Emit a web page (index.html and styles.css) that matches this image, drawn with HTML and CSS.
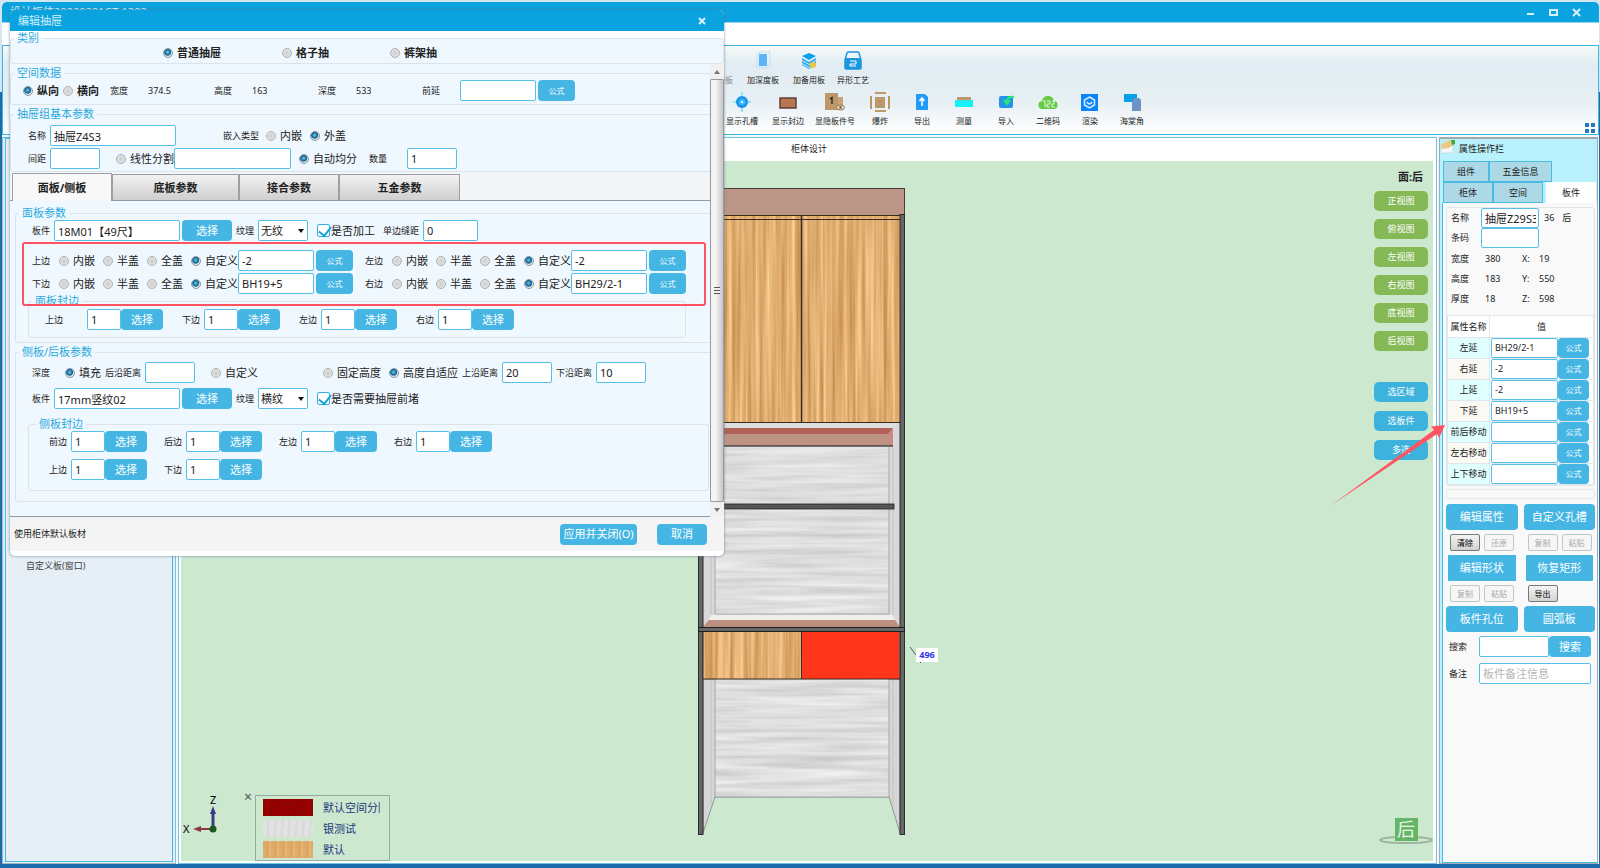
FILE: index.html
```html
<!DOCTYPE html>
<html lang="zh-CN">
<head>
  <meta charset="UTF-8" />
  <meta name="viewport" content="width=device-width, initial-scale=1.0" />
  <title>柜体设计</title>
  <link rel="stylesheet" href="styles.css">
</head>
<body>
  <div class="app">
    <header class="titlebar">
      <span class="app-title">设计柜体20220221GT-1303</span>
      <div class="win-buttons">
        <button aria-label="最小化"><svg width="9" height="9"><path d="M1 6h7" stroke="#d5f1fc" stroke-width="2"/></svg></button>
        <button aria-label="最大化"><svg width="9" height="9"><rect x="1" y="2" width="7" height="5" fill="none" stroke="#d5f1fc" stroke-width="2"/></svg></button>
        <button aria-label="关闭"><svg width="9" height="9"><path d="M1 1l7 7M8 1l-7 7" stroke="#d5f1fc" stroke-width="2"/></svg></button>
      </div>
    </header>
    <div class="menubar"></div>

    <nav class="ribbon">
      <div class="tools tools-top">
        <button class="tool dim"><svg width="20" height="20"><rect x="4" y="3" width="12" height="14" fill="#9ccdf5"/></svg>加功能板</button>
        <button class="tool"><svg width="20" height="20"><path d="M6 1h11v12l-3 4H4V5z" fill="none" stroke="#bfe0fa"/><rect x="6" y="3" width="8" height="12" fill="#5cb4f8"/></svg>加深度板</button>
        <button class="tool"><svg width="20" height="20"><path d="M10 2l7 3-7 4-7-4z" fill="#0aa0f0"/><path d="M3 7l7 4 7-4v2l-7 4-7-4zM3 10l7 4 7-4v2l-7 4-7-4zM3 13l7 4 7-4v1l-7 4-7-4z" fill="#25a8f2"/><circle cx="14" cy="14" r="3" fill="#eec43c"/></svg>加备用板</button>
        <button class="tool"><svg width="20" height="20"><path d="M2 9l2-7q.5-1 1.500-1h9q1 0 1.500 1l2 7v8q0 1-1 1H3q-1 0-1-1z" fill="#eaf6fd" stroke="#1c97dc" stroke-width="1.500"/><rect x="2" y="7" width="16" height="11" rx="1" fill="#1c97dc"/><path d="M7 10h6v3H7v2h6" fill="none" stroke="#fff"/></svg>异形工艺</button>
      </div>
      <div class="tools tools-bottom">
        <button class="tool"><svg width="20" height="20"><path d="M10 0v20M1 10h18" stroke="#8ce6fb" stroke-width="2"/><circle cx="10" cy="10" r="6" fill="#1e93ee"/><circle cx="10" cy="10" r="3" fill="#3fc0f6"/><circle cx="10" cy="10" r="1" fill="#fff"/></svg>显示孔槽</button>
        <button class="tool"><svg width="20" height="20"><rect x="2" y="6" width="16" height="10" fill="#b97552" stroke="#5c4034" stroke-width="1.500"/></svg>显示封边</button>
        <button class="tool"><svg width="20" height="20"><rect x="0" y="1" width="13" height="17" fill="#bd966a"/><rect x="13" y="5" width="5" height="10" fill="#c7a47c"/><path d="M5 7l2-1.500V12" fill="none" stroke="#222" stroke-width="1.300"/><ellipse cx="15.500" cy="15.500" rx="4" ry="2.500" fill="#e8dccb" stroke="#8e7252"/><circle cx="15.500" cy="15.500" r="1.300" fill="#70563a"/></svg>显隐板件号</button>
        <button class="tool"><svg width="20" height="20"><g fill="#bd966a"><rect x="5" y="5" width="10" height="11"/><rect x="5" y="0" width="11" height="2"/><rect x="5" y="18" width="11" height="2"/><rect x="0" y="4" width="2" height="13"/><rect x="18" y="4" width="2" height="13"/></g></svg>爆炸</button>
        <button class="tool"><svg width="20" height="20"><path d="M4 2h9l3 3v13H4z" fill="#209bf7"/><path d="M10 14V7M7.500 9L10 6l2.500 3" fill="none" stroke="#fff" stroke-width="1.500"/></svg>导出</button>
        <button class="tool"><svg width="20" height="20"><rect x="3" y="5" width="14" height="4" fill="#bd966a"/><rect x="1" y="8" width="18" height="7" fill="#0ff5fb"/><path d="M4 8v2M7 8v3M10 8v2M13 8v3M16 8v2" stroke="#60cbd6"/></svg>测量</button>
        <button class="tool"><svg width="20" height="20"><rect x="3" y="4" width="14" height="12" rx="2" fill="#2396e8"/><path d="M18 5q-7-1-7 5M8 8l3 4 3-4" fill="none" stroke="#29ec70" stroke-width="2"/></svg>导入</button>
        <button class="tool"><svg width="20" height="20"><path d="M5 17a4 4 0 0 1-1-8q1-5 6-5 5 0 6 5a4 4 0 0 1-1 8z" fill="#65ca45"/><path d="M7 15V9M5 10l2-2M9 9h3v3H9v3h3M14 9h2v3h-2v3h3" fill="none" stroke="#e6f8df"/></svg>二维码</button>
        <button class="tool"><svg width="20" height="20"><rect x="1" y="2" width="17" height="17" fill="#0a84fb"/><path d="M9.500 5l5 3v5l-5 3-5-3V8z" fill="none" stroke="#d9edff" stroke-width="1.500"/><path d="M7 10q2.500 4 5 0" fill="none" stroke="#d9edff" stroke-width="1.500"/></svg>渲染</button>
        <button class="tool"><svg width="20" height="20"><rect x="2" y="2" width="13" height="8" fill="#079fe8"/><path d="M12 6h5l2 2v11h-9V9z" fill="#6d93c4"/></svg>海棠角</button>
      </div>
      <svg class="ribbon-grid" width="10" height="10"><path d="M0 0h4v4H0zM6 0h4v4H6zM0 6h4v4H0zM6 6h4v4H6z" fill="#2678b8"/></svg>
    </nav>

    <main class="workspace">
      <aside class="side-left">
        <div class="side-left-inner"><p>自定义板(窗口)</p></div>
      </aside>

      <section class="center">
        <div class="center-tab">柜体设计</div>
        <div class="stage">
          <svg class="cabinet" width="209" height="648" viewBox="697 188 209 648">
            <defs>
              <filter id="wood" x="0" y="0" width="1" height="1" color-interpolation-filters="sRGB">
                <feTurbulence type="fractalNoise" baseFrequency="0.25 0.005" numOctaves="3" seed="4"/>
                <feColorMatrix values="0.34 0 0 0 0.71  0.4 0 0 0 0.48  0.42 0 0 0 0.23  0 0 0 0 1"/>
              </filter>
              <filter id="ash" x="0" y="0" width="1" height="1" color-interpolation-filters="sRGB">
                <feTurbulence type="fractalNoise" baseFrequency="0.008 0.18" numOctaves="3" seed="9"/>
                <feColorMatrix values="0.22 0 0 0 0.76  0.22 0 0 0 0.76  0.22 0 0 0 0.76  0 0 0 0 1"/>
              </filter>
            </defs>
            <rect x="703" y="422" width="197" height="257" fill="#d9d9d9"/>
            <path d="M703 679h197v154l-11-36H715l-12 36z" fill="#d6d6d6" stroke="#777" stroke-width=".7"/>
            <rect x="715" y="447" width="174" height="167" filter="url(#ash)"/>
            <rect x="715" y="679" width="174" height="118" filter="url(#ash)"/>
            <path d="M715 447v167h174V447M715 679v118h174V679" fill="none" stroke="#999" stroke-width=".8"/>
            <path d="M711 447v170M893 447v170M711 679v128M893 679v128" stroke="#c2c2c2"/>
            <path d="M703 422h197l-7 6H703z" fill="#dedede"/>
            <rect x="703" y="428" width="190" height="18" fill="#bd9484"/>
            <path d="M703 428h190l-5 6H703z" fill="#b16157"/>
            <path d="M888 434l5-6v18h-4z" fill="#ca8886"/>
            <path d="M703 446h190" stroke="#111"/>
            <rect x="703" y="504" width="191" height="5" fill="#555" stroke="#222" stroke-width=".8"/>
            <path d="M711 615h182l2 5H709z" fill="#f0f0ea"/>
            <path d="M709 620h186l5 7H703z" fill="#bb9080"/>
            <rect x="698.500" y="188.500" width="206" height="27" fill="#bb9585" stroke="#4a3c36"/>
            <rect x="703" y="215" width="197" height="207" filter="url(#wood)"/>
            <path d="M703 215.500h197M703 219.500h197M703 422.500h197" stroke="#3a2a1b"/>
            <path d="M801.500 216v206" stroke="#3a2a1b" stroke-width="1.500"/>
            <rect x="698.500" y="214.500" width="4.500" height="620" fill="#666" stroke="#2c2c2c"/>
            <rect x="900" y="214.500" width="4.500" height="620" fill="#666" stroke="#2c2c2c"/>
            <rect x="698.500" y="627.500" width="206" height="4" fill="#666" stroke="#1f1f1f"/>
            <rect x="703" y="632" width="98" height="47" filter="url(#wood)"/>
            <rect x="801" y="632" width="98" height="47" fill="#ff351c"/>
            <path d="M703 632v47h197v-47M801.500 632v47" fill="none" stroke="#3a2a1b"/>
          </svg>
          <svg class="leader" width="12" height="18"><path d="M1 1l6 8M11 16l1 1" stroke="#555"/></svg>
          <span class="dimension">496</span>

          <div class="view-tools">
            <strong>面:后</strong>
            <div class="view-buttons">
              <button>正视图</button>
              <button>俯视图</button>
              <button>左视图</button>
              <button>右视图</button>
              <button>底视图</button>
              <button>后视图</button>
            </div>
            <div class="pick-buttons">
              <button>选区域</button>
              <button>选板件</button>
              <button>多选</button>
            </div>
          </div>

          <svg class="axes" width="40" height="46">
            <path d="M31 35V17" stroke="#3a3a86" stroke-width="3"/><path d="M31 12l3 8h-6z" fill="#3a3a86"/>
            <path d="M31 35H16" stroke="#8a3a42" stroke-width="2"/><path d="M11 35l8-3v6z" fill="#8a3a42"/>
            <circle cx="31" cy="35" r="3.500" fill="#1c5a22"/>
            <text x="28" y="10">Z</text><text x="1" y="39">X</text>
          </svg>
          <div class="legend-close">×</div>
          <ul class="legend">
            <li><i class="swatch red"></i><span>默认空间分隔</span></li>
            <li><i class="swatch silver"></i><span>银测试</span></li>
            <li><i class="swatch oak"></i><span>默认</span></li>
          </ul>
          <div class="compass">
            <svg width="56" height="10"><ellipse cx="28" cy="5" rx="26" ry="3" fill="none" stroke="#9fb5a1" stroke-width="2"/></svg>
            <span>后</span>
          </div>
        </div>
      </section>

      <aside class="side-right">
        <div class="props-head">
          <h2><svg width="16" height="15"><rect x="1" y="5" width="12" height="9" fill="#f4f6f8" stroke="#c9ced3" stroke-width=".6"/><path d="M1 6l6-4 6-1 1 5-6 3-6 1z" fill="#ecc883"/><path d="M11 1h4v4l-3 1z" fill="#3eaa3c"/></svg>属性操作栏</h2>
          <div class="ptabs ptabs-top"><button>组件</button><button>五金信息</button></div>
          <div class="ptabs"><button>柜体</button><button>空间</button><button class="active">板件</button></div>
        </div>
        <div class="props-body">
          <div class="props-box">
            <div class="prow"><label for="pname">名称</label><input id="pname" value="抽屉Z29S3"><span>36</span><span>后</span></div>
            <div class="prow"><label for="pcode">条码</label><input id="pcode"></div>
            <dl class="dims">
              <dt>宽度</dt><dd>380</dd><dt>X:</dt><dd>19</dd>
              <dt>高度</dt><dd>183</dd><dt>Y:</dt><dd>550</dd>
              <dt>厚度</dt><dd>18</dd><dt>Z:</dt><dd>598</dd>
            </dl>
            <table class="ptable">
              <thead><tr><th>属性名称</th><th>值</th></tr></thead>
              <tbody>
                <tr><th>左延</th><td><div><input aria-label="左延" value="BH29/2-1"><button>公式</button></div></td></tr>
                <tr><th>右延</th><td><div><input aria-label="右延" value="-2"><button>公式</button></div></td></tr>
                <tr><th>上延</th><td><div><input aria-label="上延" value="-2"><button>公式</button></div></td></tr>
                <tr><th>下延</th><td><div><input aria-label="下延" value="BH19+5"><button>公式</button></div></td></tr>
                <tr><th>前后移动</th><td><div><input aria-label="前后移动"><button>公式</button></div></td></tr>
                <tr><th>左右移动</th><td><div><input aria-label="左右移动"><button>公式</button></div></td></tr>
                <tr><th>上下移动</th><td><div><input aria-label="上下移动"><button>公式</button></div></td></tr>
              </tbody>
            </table>
          </div>
          <div class="strip"></div>
          <div class="actions">
            <button class="btn big">编辑属性</button><button class="btn big">自定义孔槽</button>
            <div class="minis"><button>清除</button><button disabled>还原</button></div>
            <div class="minis"><button disabled>复制</button><button disabled>粘贴</button></div>
            <button class="btn big square">编辑形状</button><button class="btn big square">恢复矩形</button>
            <div class="minis"><button disabled>复制</button><button disabled>粘贴</button></div>
            <div class="minis"><button>导出</button></div>
            <button class="btn big">板件孔位</button><button class="btn big">圆弧板</button>
          </div>
          <div class="search"><label for="psearch">搜索</label><input id="psearch"><button class="btn">搜索</button></div>
          <div class="search note"><label for="pnote">备注</label><input id="pnote" placeholder="板件备注信息"></div>
        </div>
      </aside>
    </main>
  </div>

  <div class="dialog">
    <div class="dialog-title"><span>编辑抽屉</span><button aria-label="关闭"><svg width="8" height="8"><path d="M1 1l6 6M7 1l-6 6" stroke="#d5f1fc" stroke-width="2"/></svg></button></div>
    <fieldset class="kind">
      <legend>类别</legend>
      <div class="row kinds">
        <label class="opt"><input type="radio" name="kind" checked>普通抽屉</label>
        <label class="opt"><input type="radio" name="kind">格子抽</label>
        <label class="opt"><input type="radio" name="kind">裤架抽</label>
      </div>
    </fieldset>

    <div class="dialog-scroll">
      <div class="dialog-content">
        <fieldset class="space">
          <legend>空间数据</legend>
          <div class="row">
            <label class="opt bold"><input type="radio" name="dir" checked>纵向</label>
            <label class="opt bold"><input type="radio" name="dir">横向</label>
            <span class="datum"><b>宽度</b>374.5</span>
            <span class="datum"><b>高度</b>163</span>
            <span class="datum"><b>深度</b>533</span>
            <label class="datum-label" for="front">前延</label>
            <input class="w76" id="front"><button class="btn formula">公式</button>
          </div>
        </fieldset>

        <fieldset class="basic">
          <legend>抽屉组基本参数</legend>
          <div class="row">
            <label class="lab" for="gname">名称</label><input class="w125" id="gname" value="抽屉Z4S3">
            <span class="lab ahead-l">嵌入类型</span>
            <div class="opts">
              <label class="opt"><input type="radio" name="embed">内嵌</label>
              <label class="opt"><input type="radio" name="embed" checked>外盖</label>
            </div>
          </div>
          <div class="row split">
            <label class="lab" for="gap">间距</label><input class="w50" id="gap">
            <label class="opt ahead"><input type="radio" name="split">线性分割</label><input class="w117" aria-label="线性分割">
            <label class="opt near"><input type="radio" name="split" checked>自动均分</label>
            <label class="lab mid" for="count">数量</label><input class="w50 ahead" id="count" value="1">
          </div>
        </fieldset>

        <div class="tabs">
          <button class="active">面板/侧板</button>
          <button>底板参数</button>
          <button>接合参数</button>
          <button>五金参数</button>
        </div>

        <div class="tab-page">
          <fieldset class="front-panel">
            <legend>面板参数</legend>
            <div class="row">
              <label class="lab" for="board">板件</label><input class="w125" id="board" value="18M01【49尺】"><button class="btn pick">选择</button>
              <label class="lab" for="grain">纹理</label><span class="select"><select id="grain"><option>无纹</option></select></span>
              <label class="check"><input type="checkbox" checked>是否加工</label>
              <label class="lab" for="seam">单边缝距</label><input class="w55" id="seam" value="0">
            </div>
            <div class="row edge first">
              <span class="lab">上边</span>
              <div class="opts">
                <label class="opt"><input type="radio" name="top">内嵌</label>
                <label class="opt"><input type="radio" name="top">半盖</label>
                <label class="opt"><input type="radio" name="top">全盖</label>
                <label class="opt"><input type="radio" name="top" checked>自定义</label>
              </div>
              <input class="w76" aria-label="上边" value="-2"><button class="btn formula">公式</button>
              <span class="lab">左边</span>
              <div class="opts">
                <label class="opt"><input type="radio" name="left">内嵌</label>
                <label class="opt"><input type="radio" name="left">半盖</label>
                <label class="opt"><input type="radio" name="left">全盖</label>
                <label class="opt"><input type="radio" name="left" checked>自定义</label>
              </div>
              <input class="w76" aria-label="左边" value="-2"><button class="btn formula">公式</button>
            </div>
            <div class="row edge">
              <span class="lab">下边</span>
              <div class="opts">
                <label class="opt"><input type="radio" name="bottom">内嵌</label>
                <label class="opt"><input type="radio" name="bottom">半盖</label>
                <label class="opt"><input type="radio" name="bottom">全盖</label>
                <label class="opt"><input type="radio" name="bottom" checked>自定义</label>
              </div>
              <input class="w76" aria-label="下边" value="BH19+5"><button class="btn formula">公式</button>
              <span class="lab">右边</span>
              <div class="opts">
                <label class="opt"><input type="radio" name="right">内嵌</label>
                <label class="opt"><input type="radio" name="right">半盖</label>
                <label class="opt"><input type="radio" name="right">全盖</label>
                <label class="opt"><input type="radio" name="right" checked>自定义</label>
              </div>
              <input class="w76" aria-label="右边" value="BH29/2-1"><button class="btn formula">公式</button>
            </div>
            <fieldset class="sub band">
              <legend>面板封边</legend>
              <div class="row">
                <div class="cell"><label class="lab wide" for="b1">上边</label><input id="b1" value="1"><button class="btn">选择</button></div>
                <div class="cell"><label class="lab" for="b2">下边</label><input id="b2" value="1"><button class="btn">选择</button></div>
                <div class="cell"><label class="lab" for="b3">左边</label><input id="b3" value="1"><button class="btn">选择</button></div>
                <div class="cell"><label class="lab" for="b4">右边</label><input id="b4" value="1"><button class="btn">选择</button></div>
              </div>
            </fieldset>
          </fieldset>

          <fieldset class="side-panel">
            <legend>侧板/后板参数</legend>
            <div class="row">
              <span class="lab">深度</span>
              <label class="opt depth"><input type="radio" name="depth" checked>填充</label>
              <label class="lab tight" for="back">后沿距离</label><input class="w50" id="back">
              <label class="opt ahead"><input type="radio" name="depth">自定义</label>
              <label class="opt far"><input type="radio" name="height">固定高度</label>
              <label class="opt near"><input type="radio" name="height" checked>高度自适应</label>
              <label class="lab tight" for="up">上沿距离</label><input class="w50" id="up" value="20">
              <label class="lab tight" for="down">下沿距离</label><input class="w50" id="down" value="10">
            </div>
            <div class="row second">
              <label class="lab" for="board2">板件</label><input class="w125" id="board2" value="17mm竖纹02"><button class="btn pick">选择</button>
              <label class="lab" for="grain2">纹理</label><span class="select"><select id="grain2"><option>横纹</option></select></span>
              <label class="check"><input type="checkbox" checked>是否需要抽屉前堵</label>
            </div>
            <fieldset class="sub side-band">
              <legend>侧板封边</legend>
              <div class="row">
                <div class="cell"><label class="lab" for="s1">前边</label><input id="s1" value="1"><button class="btn">选择</button></div>
                <div class="cell"><label class="lab" for="s2">后边</label><input id="s2" value="1"><button class="btn">选择</button></div>
                <div class="cell"><label class="lab" for="s3">左边</label><input id="s3" value="1"><button class="btn">选择</button></div>
                <div class="cell"><label class="lab" for="s4">右边</label><input id="s4" value="1"><button class="btn">选择</button></div>
              </div>
              <div class="row">
                <div class="cell"><label class="lab" for="s5">上边</label><input id="s5" value="1"><button class="btn">选择</button></div>
                <div class="cell"><label class="lab" for="s6">下边</label><input id="s6" value="1"><button class="btn">选择</button></div>
              </div>
            </fieldset>
          </fieldset>
        </div>
      </div>
      <div class="scrollbar">
        <span class="arrow up"></span>
        <div class="thumb"><i></i></div>
        <span class="arrow down"></span>
      </div>
    </div>

    <footer class="dialog-footer">
      <span>使用柜体默认板材</span>
      <div><button class="btn apply">应用并关闭(O)</button><button class="btn cancel">取消</button></div>
    </footer>
    <div class="mark"></div>
  </div>

  <svg class="pointer" width="116" height="84" viewBox="1330 424 116 84"><path d="M1331 505.500L1434 430l-3-3.500 14-1.500-6 13-2-4z" fill="#ff5361"/></svg>
</body>
</html>
```
FILE: styles.css
```css
* {
  margin: 0;
  padding: 0;
  box-sizing: border-box;
}
body {
  position: relative;
  height: 100vh;
  overflow: hidden;
  font-family: 'Noto Sans', 'Noto Sans CJK SC', sans-serif;
  font-size: 9px;
  line-height: 14px;
  color: #222;
  background: linear-gradient(#d4e6f2 0, #d4e6f2 92px, #1a6cab 92px, #1a6cab 100%);
}
button, input, select {
  font: inherit;
  color: inherit;
  border: none;
  outline: none;
}
button {
  background: none;
  white-space: nowrap;
  line-height: 12px;
}
input, select {
  background: #fff;
  border: 1px solid #55bfe8;
  border-radius: 2px;
  min-width: 0;
}

/* main window */
.app {
  height: 100%;
  padding: 2px 1px 4px 2px;
  display: flex;
  flex-direction: column;
}
.titlebar {
  height: 21px;
  flex: none;
  display: flex;
  justify-content: space-between;
  align-items: center;
  padding: 0 18px 0 8px;
  border-radius: 5px 5px 0 0;
  background: #0aa3df;
  border-bottom: 1px solid #8fd6f0;
  color: #d5f1fc;
  font-size: 11px;
}
.win-buttons {
  display: flex;
  gap: 14px;
}
.win-buttons svg {
  display: block;
}
.menubar {
  height: 22px;
  flex: none;
  background: #fff;
}
.ribbon {
  position: relative;
  height: 90px;
  flex: none;
  overflow: hidden;
  border: 1px solid #3bb5e2;
  background: linear-gradient(#f7faf7, #e1ecf3 18px, #e6eff3 55px, #fff);
}
.tools {
  display: flex;
}
.tools-top {
  padding: 5px 0 0 691px;
}
.tools-bottom {
  padding: 2px 0 0 716px;
}
.tool {
  padding: 0 4px;
  display: flex;
  flex-direction: column;
  align-items: center;
  gap: 3px;
  min-width: 42px;
  height: 39px;
  font-size: 8px;
}
.tool svg {
  flex: none;
}
.tool:nth-child(-n+3) {
  min-width: 46px;
}
.dim {
  color: #888;
}
.ribbon-grid {
  position: absolute;
  right: 3px;
  bottom: 1px;
}
.workspace {
  flex: 1;
  min-height: 0;
  display: flex;
  padding: 2px 1px 0 0;
  gap: 2px;
  background: #f3f8fb;
}
.side-left {
  width: 174px;
  flex: none;
  border: 1px solid #a9b4bd;
  border-top-color: #62bfe2;
  padding: 0 2px 1px;
  background: #d6eff9;
}
.side-left-inner {
  height: 100%;
  border: 1px solid #49bce6;
  background: #e6eef6;
  padding: 420px 20px 0;
  color: #444;
}

/* drawing area */
.center {
  flex: 1;
  border: 1px solid #6cc5e8;
  padding: 0 3px 2px 2px;
  display: flex;
  flex-direction: column;
  background: #fff;
}
.center-tab {
  height: 23px;
  flex: none;
  padding-left: 4px;
  text-align: center;
  line-height: 21px;
}
.stage {
  position: relative;
  flex: 1;
  min-height: 0;
  background: #cce8cf;
}
.cabinet {
  position: absolute;
  left: 516px;
  top: 27px;
}
.leader {
  position: absolute;
  left: 728px;
  top: 485px;
}
.dimension {
  position: absolute;
  left: 735px;
  top: 487px;
  width: 22px;
  text-align: center;
  background: #fff;
  color: #3333ee;
  font-weight: bold;
}
.view-tools {
  position: absolute;
  right: 5px;
  top: 8px;
  width: 54px;
}
.view-tools strong {
  display: block;
  text-align: right;
  padding-right: 5px;
  font-size: 11px;
  line-height: 16px;
}
.view-buttons, .pick-buttons {
  display: flex;
  flex-direction: column;
  gap: 8px;
  margin-top: 6px;
}
.pick-buttons {
  gap: 9px;
  margin-top: 31px;
}
.view-buttons button, .pick-buttons button {
  height: 20px;
  border-radius: 5px;
  background: #84b956;
  color: #fff;
}
.pick-buttons button {
  background: #3cb2dc;
}
.axes {
  position: absolute;
  left: 1px;
  bottom: 21px;
  font-size: 11px;
}
.legend-close {
  position: absolute;
  left: 63px;
  bottom: 57px;
  font-size: 14px;
  color: #555;
}
.legend {
  position: absolute;
  left: 74px;
  bottom: 0;
  width: 135px;
  height: 66px;
  padding: 1px 8px 0 7px;
  border: 1px solid #98a8a0;
  list-style: none;
  font-size: 11px;
  color: #23397d;
}
.legend li {
  display: flex;
  align-items: center;
  gap: 10px;
  height: 21px;
}
.legend span {
  width: 57px;
  overflow: hidden;
  white-space: nowrap;
}
.swatch {
  width: 50px;
  height: 17px;
  flex: none;
}
.red {
  background: repeating-linear-gradient(165deg, #980000 0 4px, #860406 5px 6px);
}
.silver {
  background: repeating-linear-gradient(95deg, #e2e2e2 0 4px, #dadada 5px 7px);
}
.oak {
  background: repeating-linear-gradient(90deg, #e1ac6a 0 3px, #d8a262 4px 5px, #e5b474 6px 8px);
}
.compass {
  position: absolute;
  right: -1px;
  bottom: 16px;
  width: 56px;
  height: 27px;
  display: flex;
  justify-content: center;
  align-items: flex-start;
}
.compass svg {
  position: absolute;
  left: 0;
  bottom: 0;
}
.compass span {
  position: relative;
  width: 23px;
  height: 23px;
  background: #65b567;
  color: #e4f5e4;
  font-size: 18px;
  line-height: 22px;
  text-align: center;
}

/* property panel */
.side-right {
  width: 159px;
  flex: none;
  border: 1px solid #a5a9ac;
  border-top-width: 2px;
  display: flex;
  flex-direction: column;
  background: #b8f1fb;
}
.props-head {
  padding-right: 1px;
}
.props-head h2 {
  height: 22px;
  display: flex;
  gap: 3px;
  font-size: 9px;
  font-weight: normal;
  line-height: 19px;
}
.ptabs {
  display: flex;
  height: 21px;
  padding-left: 3px;
}
.ptabs button {
  flex: 1;
  background: #add8e6;
  border: 1px solid #49bce6;
}
.ptabs .active {
  margin-left: 3px;
  background: #fff;
  border-color: #fff;
}
.ptabs-top {
  padding-right: 44px;
}
.ptabs-top button:last-child {
  flex: 0 0 63px;
}
.props-body {
  flex: 1;
  margin-left: 2px;
  padding: 4px 2px 4px 3px;
  border-left: 1px solid #49bce6;
  border-bottom: 1px solid #49bce6;
  background: #f9f9f9;
}
.props-box {
  border: 1px solid #e2e6e8;
  border-radius: 3px;
}
.prow {
  display: flex;
  align-items: center;
  height: 20px;
  padding-left: 4px;
  gap: 5px;
}
.prow label {
  width: 25px;
}
.prow input {
  width: 58px;
  height: 20px;
  padding: 0 2px 0 3px;
  font-size: 11px;
}
.prow span + span {
  margin-left: 3px;
}
.dims {
  display: grid;
  grid-template-columns: 34px 37px 17px auto;
  padding: 1px 0 0 4px;
  line-height: 20px;
}
.ptable {
  width: 100%;
  margin-top: 6px;
  border-collapse: collapse;
  table-layout: fixed;
  background: #fff;
}
.ptable th, .ptable td {
  height: 21px;
  border: 1px solid #dde7ee;
  font-weight: normal;
}
.ptable thead th {
  height: 22px;
}
.ptable thead th:first-child {
  width: 42px;
}
.ptable tbody th {
  background: #fbf9f4;
  white-space: nowrap;
}
.ptable tbody tr:nth-child(odd) th {
  background: #e0ffff;
}
.ptable td div {
  display: flex;
  height: 20px;
  padding: 0 4px 0 1px;
}
.ptable input {
  flex: 1;
  padding: 0 3px;
}
.ptable button {
  width: 31px;
  border-radius: 4px;
  background: #45b6e4;
  color: #fff;
  font-size: 8px;
}
.strip {
  height: 10px;
  margin: 3px 0 5px;
  border: 1px solid #dfeaf1;
  border-radius: 3px;
}
.btn {
  height: 21px;
  flex: none;
  border-radius: 4px;
  background: #45b6e4;
  color: #fff;
  font-size: 11px;
}
.actions {
  display: grid;
  grid-template-columns: 1fr 1fr;
  column-gap: 6px;
  row-gap: 4px;
}
.actions .big {
  height: 26px;
}
.actions .square {
  margin: 0 2px;
  border-radius: 1px;
}
.minis {
  display: flex;
  gap: 4px;
  padding-left: 4px;
}
.minis button {
  width: 30px;
  height: 17px;
  border: 1px solid #777;
  border-radius: 2px;
  background: linear-gradient(#f4f4f4, #d2d2d2);
  font-size: 8px;
  color: #000;
}
.minis button:disabled {
  border-color: #c2c6c8;
  background: #f6f6f6;
  color: #aaa;
}
.search {
  display: flex;
  align-items: center;
  padding: 4px 4px 0 3px;
}
.search label {
  width: 30px;
}
.search input {
  flex: 1;
  height: 21px;
  padding: 0 3px;
  font-size: 11px;
}
.search .btn {
  width: 42px;
}
.note {
  padding-top: 6px;
}
.note input::placeholder {
  color: #b5b5b5;
}

/* drawer dialog */
.dialog {
  position: absolute;
  left: 10px;
  top: 10px;
  width: 714px;
  border-radius: 5px;
  background: #fff;
  box-shadow: 0 0 2px 1px rgba(90, 120, 140, 0.4);
  padding-bottom: 5px;
}
.dialog-title {
  height: 21px;
  display: flex;
  justify-content: space-between;
  align-items: center;
  padding: 0 18px 0 8px;
  border-radius: 5px 5px 0 0;
  background: #0aa3df;
  color: #d5f1fc;
  font-size: 11px;
}
.dialog-title svg {
  display: block;
}
.dialog fieldset {
  border: 1px solid #dde4e9;
  border-radius: 3px;
  min-width: 0;
}
.dialog legend {
  height: 14px;
  margin-left: 3px;
  padding: 0 3px;
  font-size: 11px;
  color: #2ba9dd;
}
.dialog .kind {
  padding: 0 0 2px;
  background: #f0f8ff;
}
.row {
  display: flex;
  align-items: center;
  height: 21px;
  padding-left: 16px;
}
.row.kinds {
  height: 16px;
  gap: 61px;
  padding-left: 152px;
  font-weight: bold;
}
.dialog-scroll {
  display: flex;
  background: #f0f8ff;
}
.dialog-content {
  flex: 1;
  min-width: 0;
  padding-top: 2px;
  border-bottom: 1px solid #909aa3;
}
.dialog-content > fieldset, .tab-page > fieldset {
  border-right: none;
  border-radius: 3px 0 0 3px;
}
.opt, .check {
  display: flex;
  align-items: center;
  gap: 4px;
  font-size: 11px;
  white-space: nowrap;
}
.opts {
  display: flex;
  gap: 8px;
}
input[type="radio"] {
  appearance: none;
  width: 10px;
  height: 10px;
  flex: none;
  border: 1px solid #a8b0b5;
  border-radius: 50%;
  background: radial-gradient(#ccc, #eee);
}
input[type="radio"]:checked {
  border-color: #8497a3;
  background: radial-gradient(circle at 45% 40%, #5fd3f5 0, #135b86 3px, #dfe8ee 4px);
}
input[type="checkbox"] {
  appearance: none;
  width: 13px;
  height: 13px;
  flex: none;
  border: 1px solid #35b0e2;
}
input[type="checkbox"]:checked::after {
  content: '';
  display: block;
  width: 6px;
  height: 10px;
  margin: -1px 0 0 3px;
  border: solid #1ba2dd;
  border-width: 0 2px 2px 0;
  transform: rotate(38deg);
}
.check {
  gap: 1px;
  margin: 0 8px 0 9px;
}
.row > input, .cell input {
  height: 21px;
  padding: 0 3px;
  font-size: 11px;
}
.w50 { width: 50px; }
.w55 { width: 55px; }
.w76 { width: 76px; }
.w117 { width: 117px; }
.w125 { width: 126px; }
.lab {
  flex: none;
  margin-right: 4px;
  white-space: nowrap;
}
.bold {
  font-weight: bold;
}
.formula {
  width: 37px;
  margin-left: 2px;
  font-size: 8px;
}
.pick {
  width: 50px;
  margin: 0 4px 0 2px;
}
.ahead {
  margin-left: 16px;
}
.near {
  margin-left: 8px;
}
.dialog .space {
  padding-bottom: 3px;
}
.space .row {
  padding-left: 12px;
}
.space .opt {
  margin-right: 4px;
}
.datum {
  width: 104px;
  display: flex;
}
.datum b {
  width: 38px;
  font-weight: normal;
}
.space .opt + .datum {
  margin-left: 7px;
}
.datum-label {
  width: 38px;
}
.basic {
  margin-top: 2px;
  padding: 4px 0 2px;
}
.basic .row {
  padding-left: 17px;
}
.split {
  margin-top: 2px;
}
.ahead-l {
  margin-left: 47px;
}
.basic .opts {
  margin-left: 3px;
}
.basic .mid {
  margin-left: 12px;
}
.tabs {
  display: flex;
  align-items: flex-end;
  padding: 1px 0 0 2px;
  border-bottom: 1px solid #909aa3;
  background: #f3f6f9;
}
.tabs button {
  width: 100px;
  height: 26px;
  border: 1px solid #9aa1a6;
  border-bottom: none;
  background: linear-gradient(#f2f2f2, #cfcfcf);
  font-size: 11px;
  font-weight: bold;
}
.tabs button:nth-child(2) {
  width: 127px;
}
.tabs button:nth-child(4) {
  width: 121px;
}
.tabs .active {
  height: 28px;
  margin-bottom: -1px;
  background: #f8f8f8;
}
.tab-page {
  padding: 5px 0 14px 5px;
}
.front-panel {
  padding-bottom: 4px;
}
.edge {
  margin-top: 2px;
}
.first {
  margin-top: 9px;
}
.edge .lab {
  margin-right: 9px;
}
.edge .formula + .lab {
  margin-left: 12px;
}
.sub {
  margin-left: 12px;
}
.band {
  margin-right: 24px;
  padding: 1px 0 7px;
}
.side-band {
  margin: 8px 1px 0 12px;
  padding: 0 0 10px 4px;
}
.side-band .row + .row {
  margin-top: 7px;
}
.cell {
  display: flex;
  align-items: center;
  margin-right: 17px;
}
.band .cell {
  margin-right: 19px;
}
.cell input {
  width: 34px;
}
.cell .btn {
  width: 42px;
}
.cell .wide {
  width: 38px;
}
.select {
  position: relative;
}
.select select {
  appearance: none;
  display: block;
  width: 50px;
  height: 21px;
  padding-left: 2px;
  font-size: 11px;
}
.select::after {
  content: '';
  position: absolute;
  right: 4px;
  top: 9px;
  border: 3px solid transparent;
  border-top: 4px solid #111;
}
.side-panel {
  margin-top: 2px;
  padding: 3px 0 10px;
}
.side-panel .depth {
  margin-left: 11px;
}
.side-panel .tight {
  margin-left: 4px;
}
.side-panel .far {
  margin-left: 65px;
}
.second {
  margin-top: 5px;
}
.scrollbar {
  width: 14px;
  flex: none;
  display: flex;
  flex-direction: column;
  background: #f0f0f0;
}
.arrow {
  height: 15px;
  flex: none;
}
.arrow::after {
  content: '';
  display: block;
  width: 0;
  margin: 6px auto 0;
  border: 3px solid transparent;
  border-top: none;
  border-bottom: 4px solid #777;
}
.arrow.down::after {
  border-bottom: none;
  border-top: 4px solid #777;
}
.thumb {
  flex: 1;
  display: flex;
  align-items: center;
  justify-content: center;
  border: 1px solid #999;
  border-radius: 1px;
  background: linear-gradient(90deg, #f4f4f4 40%, #c5c5c8);
}
.thumb i {
  width: 6px;
  height: 7px;
  background: repeating-linear-gradient(#555 0 1px, #eee 1px 3px);
}
.dialog-footer {
  height: 34px;
  display: flex;
  justify-content: space-between;
  align-items: center;
  padding: 0 17px 0 4px;
  background: #f4f4f4;
}
.apply {
  width: 77px;
  margin-right: 20px;
}
.cancel {
  width: 50px;
}
/* highlighted rows and the arrow that points at the values */
.mark {
  position: absolute;
  left: 12px;
  top: 232px;
  width: 684px;
  height: 64px;
  border: 2px solid #ff5361;
  border-radius: 3px;
}
.pointer {
  position: absolute;
  left: 1330px;
  top: 424px;
}
```
